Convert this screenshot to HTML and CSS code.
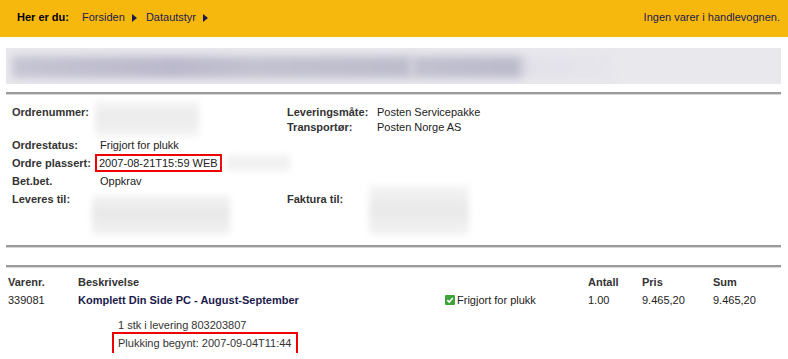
FILE: index.html
```html
<!DOCTYPE html>
<html lang="no">
  <head>
    <meta charset="UTF-8" />
    <title>Ordrestatus</title>
    <link rel="stylesheet" href="styles.css">
  </head>
  <body>
    <div id="topbar">
      <div class="crumbs">
        <b>Her er du:</b>
        <a href="#">Forsiden</a><span class="arrow"></span>
        <a href="#">Datautstyr</a><span class="arrow"></span>
      </div>
      <div class="cart">Ingen varer i handlevognen.</div>
    </div>

    <div id="page">
      <div class="titlebox">
        <div class="smudge title-smudge"></div>
        <div class="smudge title-smudge2"></div>
      </div>
      <div class="rule top"></div>

      <!-- Ordreinfo -->
      <div class="orderinfo">
        <div class="row first">
          <div class="label">Ordrenummer:</div>
          <div class="value"><div class="smudge ordernr-smudge"></div></div>
          <div class="label">Leveringsmåte:<br>Transportør:</div>
          <div class="value">Posten Servicepakke<br>Posten Norge AS</div>
        </div>
        <div class="row">
          <div class="label">Ordrestatus:</div>
          <div class="value">Frigjort for plukk</div>
        </div>
        <div class="row">
          <div class="label">Ordre plassert:</div>
          <div class="value"><span class="marked">2007-08-21T15:59 WEB</span><div class="smudge placed-smudge"></div></div>
        </div>
        <div class="row">
          <div class="label">Bet.bet.</div>
          <div class="value">Oppkrav</div>
        </div>
        <div class="row last">
          <div class="label">Leveres til:</div>
          <div class="value"><div class="smudge address-smudge"></div></div>
          <div class="label">Faktura til:</div>
          <div class="value"><div class="smudge invoice-smudge"></div></div>
        </div>
      </div>
      <div class="rule"></div>
      <div class="rule second"></div>

      <!-- Varelinjer -->
      <div class="lines">
        <div class="line head">
          <div>Varenr.</div>
          <div>Beskrivelse</div>
          <div></div>
          <div>Antall</div>
          <div>Pris</div>
          <div>Sum</div>
        </div>
        <div class="line">
          <div>339081</div>
          <div class="product">Komplett Din Side PC - August-September</div>
          <div class="status"><span class="check"><svg width="10" height="10" viewBox="0 0 10 10"><rect width="10" height="10" rx="1" fill="#3ea33a"/><path d="M2.3 5.2 L4.2 7 L7.8 3" fill="none" stroke="#fff" stroke-width="1.6"/></svg></span>Frigjort for plukk</div>
          <div>1.00</div>
          <div>9.465,20</div>
          <div>9.465,20</div>
        </div>
        <div class="delivery">
          <div>1 stk i levering 803203807</div>
          <div class="marked">Plukking begynt: 2007-09-04T11:44</div>
        </div>
      </div>
    </div>
  </body>
</html>
```

FILE: styles.css
```css
body {
  margin: 0;
  font-family: "Liberation Sans", Arial, sans-serif;
  font-size: 11px;
  color: #222;
  background-color: #fff;
}

/* Topplinje */
#topbar {
  display: flex;
  justify-content: space-between;
  align-items: flex-start;
  height: 37px;
  padding: 11px 8px 0 17px;
  box-sizing: border-box;
  background-color: #f7b80e;
  color: #1c1a4c;
}

#topbar a {
  color: #1c1a4c;
  text-decoration: none;
}

.crumbs b {
  color: #000;
  margin-right: 10px;
}

.arrow {
  display: inline-block;
  width: 0;
  height: 0;
  margin: 0 6px 0 7px;
  border-top: 4px solid transparent;
  border-bottom: 4px solid transparent;
  border-left: 5px solid #1c1a4c;
  vertical-align: -1px;
}

#page {
  padding: 11px 7px 0 6px;
}

.titlebox {
  position: relative;
  height: 36px;
  background-color: #e9e8ed;
  overflow: hidden;
}

.smudge {
  filter: blur(3px);
  border-radius: 2px;
}

.title-smudge {
  position: absolute;
  left: 6px;
  top: 8px;
  width: 400px;
  height: 22px;
  filter: blur(4px);
  background: linear-gradient(90deg, #c6c5d3, #bab8cb 40%, #c3c2d0 60%, #bdbccc);
}

.title-smudge2 {
  position: absolute;
  left: 406px;
  top: 8px;
  width: 200px;
  height: 22px;
  filter: blur(4px);
  background: linear-gradient(90deg, #c2c1d0, #bbbacb 52%, #e3e2ea 58%, #e6e5ec);
}

.rule {
  height: 0;
  border-top: 2px solid #9a9a9a;
  border-bottom: 1px solid #d8d8d8;
}

.rule.top {
  margin-top: 8px;
}

.rule.second {
  margin-top: 17px;
}

/* Ordreinfo */
.orderinfo {
  padding: 9px 0 7px 6px;
}

.row {
  display: grid;
  grid-template-columns: 88px 187px 90px auto;
  height: 18px;
  line-height: 18px;
}

.row.first {
  height: 32px;
  line-height: 15px;
  padding-top: 1px;
  box-sizing: border-box;
}

.row.last {
  height: 48px;
}

.label {
  font-weight: bold;
  color: #333;
  white-space: nowrap;
}

.row .value {
  position: relative;
  white-space: nowrap;
}

.ordernr-smudge {
  position: absolute;
  left: -5px;
  top: -4px;
  width: 104px;
  height: 36px;
  background: linear-gradient(180deg, #f6f6f6, #ebebeb 40%, #efefef 70%, #f6f6f6);
}

.marked {
  outline: 2px solid #e00;
  padding: 1px 2px;
}

.row .marked {
  margin-left: -3px;
}

.placed-smudge {
  position: absolute;
  left: 126px;
  top: 1px;
  width: 64px;
  height: 16px;
  background: #f1f1f1;
}

.address-smudge {
  position: absolute;
  left: -8px;
  top: 5px;
  width: 138px;
  height: 40px;
  background: linear-gradient(180deg, #f4f4f4, #e8e8e8 45%, #ececec 70%, #f4f4f4);
}

.invoice-smudge {
  position: absolute;
  left: -8px;
  top: -5px;
  width: 100px;
  height: 50px;
  background: linear-gradient(180deg, #f6f6f6, #e9e9e9 45%, #ececec 70%, #f4f4f4);
}

/* Varelinjer */
.lines {
  padding: 5px 0 0 2px;
}

.line {
  display: grid;
  grid-template-columns: 70px 367px 143px 54px 71px auto;
  line-height: 18px;
}

.line.head {
  font-weight: bold;
  color: #333;
}

.product {
  font-weight: bold;
  color: #1c1a4c;
}

.check {
  display: inline-block;
  margin-right: 2px;
  vertical-align: -1px;
}

.check svg {
  display: block;
}

.delivery {
  padding: 9px 0 0 110px;
  line-height: 15px;
  color: #333;
}

.delivery .marked {
  display: inline-block;
  padding: 2px 5px 2px 4px;
  margin-left: -4px;
  margin-top: 1px;
  line-height: 15px;
}
```
